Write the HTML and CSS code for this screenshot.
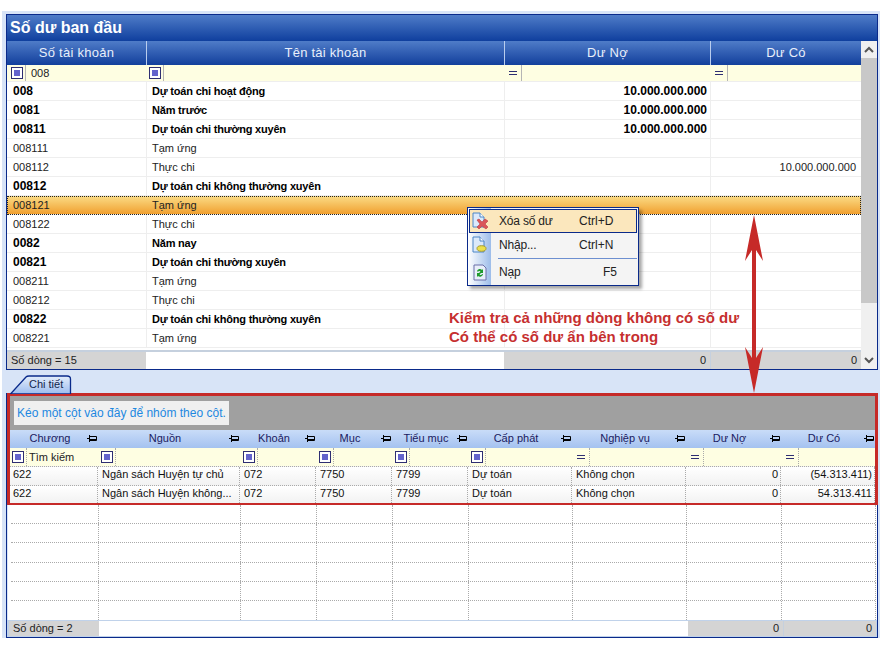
FILE: index.html
```html
<!DOCTYPE html>
<html lang="vi">
<head>
  <meta charset="UTF-8">
  <title>Số dư ban đầu</title>
  <link rel="stylesheet" href="styles.css">
</head>
<body>
  <div class="window">
    <!-- Top grid -->
    <div class="top-panel">
      <div class="title-bar">Số dư ban đầu</div>
      <div class="top-body">
        <div class="top-grid">
          <div class="top-row top-head">
            <div>Số tài khoản</div>
            <div>Tên tài khoản</div>
            <div>Dư Nợ</div>
            <div>Dư Có</div>
          </div>
          <div class="top-row top-filter">
            <div><span class="chk"></span><span class="sep"></span>008</div>
            <div><span class="chk"></span><span class="sep"></span></div>
            <div><span class="eq"></span><span class="sep"></span></div>
            <div><span class="eq"></span><span class="sep"></span></div>
          </div>
          <div class="top-row data bold"><div>008</div><div>Dự toán chi hoạt động</div><div class="num">10.000.000.000</div><div></div></div>
          <div class="top-row data bold"><div>0081</div><div>Năm trước</div><div class="num">10.000.000.000</div><div></div></div>
          <div class="top-row data bold"><div>00811</div><div>Dự toán chi thường xuyên</div><div class="num">10.000.000.000</div><div></div></div>
          <div class="top-row data"><div>008111</div><div>Tạm ứng</div><div></div><div></div></div>
          <div class="top-row data"><div>008112</div><div>Thực chi</div><div></div><div class="num">10.000.000.000</div></div>
          <div class="top-row data bold"><div>00812</div><div>Dự toán chi không thường xuyên</div><div></div><div></div></div>
          <div class="top-row data selected"><div>008121</div><div>Tạm ứng</div><div></div><div></div></div>
          <div class="top-row data"><div>008122</div><div>Thực chi</div><div></div><div></div></div>
          <div class="top-row data bold"><div>0082</div><div>Năm nay</div><div></div><div></div></div>
          <div class="top-row data bold"><div>00821</div><div>Dự toán chi thường xuyên</div><div></div><div></div></div>
          <div class="top-row data"><div>008211</div><div>Tạm ứng</div><div></div><div></div></div>
          <div class="top-row data"><div>008212</div><div>Thực chi</div><div></div><div></div></div>
          <div class="top-row data bold"><div>00822</div><div>Dự toán chi không thường xuyên</div><div></div><div></div></div>
          <div class="top-row data"><div>008221</div><div>Tạm ứng</div><div></div><div></div></div>
          <div class="top-spacer"></div>
          <div class="top-row top-foot">
            <div class="gray">Số dòng = 15</div>
            <div></div>
            <div class="gray num">0</div>
            <div class="gray num">0</div>
          </div>
        </div>
        <div class="scrollbar">
          <svg class="chevron" width="16" height="17" viewBox="0 0 16 17"><path d="M4 11l4-4 4 4" fill="none" stroke="#555" stroke-width="2"/></svg>
          <div class="thumb"></div>
          <svg class="chevron chevron-end" width="16" height="17" viewBox="0 0 16 17"><path d="M4 6l4 4 4-4" fill="none" stroke="#555" stroke-width="2"/></svg>
        </div>
      </div>
    </div>

    <!-- Tab -->
    <div class="tab-strip">
      <div class="tab">
        <svg class="tab-shape" width="62" height="19" viewBox="0 0 62 19">
          <defs>
            <linearGradient id="tabFill" x1="0" y1="0" x2="0" y2="1">
              <stop offset="0" stop-color="#e3edfb"/>
              <stop offset="1" stop-color="#9dbcee"/>
            </linearGradient>
          </defs>
          <path d="M0.5 19L16 2Q17 1 19 1H57Q60.500 1 60.500 4V19Z" fill="url(#tabFill)" stroke="#0a2a8a" stroke-width="1.300"/>
        </svg>
        <span class="tab-label">Chi tiết</span>
      </div>
    </div>

    <!-- Detail grid -->
    <div class="detail-panel">
      <div class="red-box">
        <div class="group-area"><span class="group-hint">Kéo một cột vào đây để nhóm theo cột.</span></div>
        <div class="det-row det-head">
          <div>Chương<svg class="pin"><use href="#pin"/></svg></div>
          <div>Nguồn<svg class="pin"><use href="#pin"/></svg></div>
          <div>Khoản<svg class="pin"><use href="#pin"/></svg></div>
          <div>Mục<svg class="pin"><use href="#pin"/></svg></div>
          <div>Tiểu mục<svg class="pin"><use href="#pin"/></svg></div>
          <div>Cấp phát<svg class="pin"><use href="#pin"/></svg></div>
          <div>Nghiệp vụ<svg class="pin"><use href="#pin"/></svg></div>
          <div>Dư Nợ<svg class="pin"><use href="#pin"/></svg></div>
          <div>Dư Có<svg class="pin"><use href="#pin"/></svg></div>
        </div>
        <div class="det-row det-filter">
          <div><span class="chk"></span><span class="sep"></span>Tìm kiếm</div>
          <div><span class="chk"></span><span class="sep"></span></div>
          <div><span class="chk"></span><span class="sep"></span></div>
          <div><span class="chk"></span><span class="sep"></span></div>
          <div><span class="chk"></span><span class="sep"></span></div>
          <div><span class="chk"></span><span class="sep"></span></div>
          <div><span class="eq"></span><span class="sep"></span></div>
          <div><span class="eq"></span><span class="sep"></span></div>
          <div><span class="eq"></span><span class="sep"></span></div>
        </div>
        <div class="det-row det-data">
          <div>622</div><div>Ngân sách Huyện tự chủ</div><div>072</div><div>7750</div><div>7799</div><div>Dự toán</div><div>Không chọn</div><div class="num">0</div><div class="num">(54.313.411)</div>
        </div>
        <div class="det-row det-data">
          <div>622</div><div>Ngân sách Huyện không...</div><div>072</div><div>7750</div><div>7799</div><div>Dự toán</div><div>Không chọn</div><div class="num">0</div><div class="num">54.313.411</div>
        </div>
      </div>
      <div class="det-blank">
        <div class="det-row"><div></div><div></div><div></div><div></div><div></div><div></div><div></div><div></div><div></div></div>
        <div class="det-row"><div></div><div></div><div></div><div></div><div></div><div></div><div></div><div></div><div></div></div>
        <div class="det-row"><div></div><div></div><div></div><div></div><div></div><div></div><div></div><div></div><div></div></div>
        <div class="det-row"><div></div><div></div><div></div><div></div><div></div><div></div><div></div><div></div><div></div></div>
        <div class="det-row"><div></div><div></div><div></div><div></div><div></div><div></div><div></div><div></div><div></div></div>
        <div class="det-row"><div></div><div></div><div></div><div></div><div></div><div></div><div></div><div></div><div></div></div>
      </div>
      <div class="det-foot">
        <div class="gray">Số dòng = 2</div>
        <div class="blank"></div>
        <div class="gray num">0</div>
        <div class="gray num">0</div>
      </div>
    </div>
  </div>

  <!-- Context menu -->
  <div class="context-menu">
    <div class="menu-item hover">
      <svg class="menu-icon" width="18" height="18" viewBox="0 0 18 18">
        <path d="M2 1h7l4 4v10H2z" fill="#dbe9fb" stroke="#4c86c6"/>
        <path d="M9 1v4h4" fill="#fff" stroke="#4c86c6"/>
        <path d="M6 8l2-1 3 3 3-3 3 2-3 3 3 3-2 2-4-3-3 3-2-2 3-3z" fill="#d9545a" stroke="#b52b30" stroke-width=".5"/>
      </svg>
      <span class="menu-text">Xóa số dư</span><span class="menu-key">Ctrl+D</span>
    </div>
    <div class="menu-item">
      <svg class="menu-icon" width="18" height="18" viewBox="0 0 18 18">
        <path d="M2 1h7l4 4v11H2z" fill="#dbe9fb" stroke="#4c86c6"/>
        <path d="M9 1v4h4" fill="#fff" stroke="#4c86c6"/>
        <ellipse cx="10.500" cy="12.500" rx="4.500" ry="2.800" fill="#ece04c" stroke="#a59a2c"/>
      </svg>
      <span class="menu-text">Nhập...</span><span class="menu-key">Ctrl+N</span>
    </div>
    <div class="menu-sep"></div>
    <div class="menu-item">
      <svg class="menu-icon" width="18" height="18" viewBox="0 0 18 18">
        <path d="M3 2h9l3 3v12H3z" fill="#e8eefa" stroke="#6a6fa8"/>
        <path d="M6 8a3 3 0 0 1 5-1l1-1v4H8l1.500-1.500A1.500 1.500 0 0 0 7 9zM12 11a3 3 0 0 1-5 2l-1 1v-4h4l-1.500 1.500A1.500 1.500 0 0 0 11 11z" fill="#1f9a2c"/>
      </svg>
      <span class="menu-text">Nạp</span><span class="menu-key menu-key-f">F5</span>
    </div>
  </div>

  <!-- Annotation -->
  <div class="note">Kiểm tra cả những dòng không có số dư<br>Có thể có số dư ẩn bên trong</div>
  <svg class="big-arrow" width="20" height="178" viewBox="0 0 20 178">
    <path d="M10 0L19 46L12 35V143L19 132L10 178L1 132L8 143V35L1 46Z" fill="#c62a28"/>
  </svg>

  <svg width="0" height="0" class="defs">
    <symbol id="pin" viewBox="0 0 10 7">
      <path d="M0 3.500h2M2.500 0v7M3 1.500h6.500v4H3M3 4.500h6" fill="none" stroke="#000"/>
    </symbol>
  </svg>
</body>
</html>
```
FILE: styles.css
```css
* {
  box-sizing: border-box;
  margin: 0;
  padding: 0;
}

body {
  position: relative;
  width: 882px;
  height: 651px;
  overflow: hidden;
  background-color: white;
  font-family: "Liberation Sans", Arial, sans-serif;
  font-size: 11px;
  color: #222;
}

.window {
  width: 878px;
  height: 627px;
  margin: 11px 2px 0;
  padding: 3px 2px 0 4px;
  background-color: #d8e4f7;
}

/* top grid */
.top-panel {
  height: 356px;
  border: 1px solid #0a2a8a;
  background-color: white;
}

.title-bar {
  height: 26px;
  padding-left: 3px;
  background: linear-gradient(#4f7cc8, #0f3f9e);
  color: white;
  font-size: 16px;
  font-weight: bold;
  line-height: 25px;
}

.top-body {
  display: flex;
  height: 328px;
}

.top-grid {
  display: flex;
  flex-direction: column;
  width: 854px;
}

.top-row {
  display: grid;
  grid-template-columns: 139px 358px 206px 151px;
}

.top-head {
  height: 24px;
  background: linear-gradient(#4f7cc8, #123f9c);
  color: #e8effb;
  font-size: 13px;
  letter-spacing: 0.25px;
  line-height: 23px;
  text-align: center;
}

.top-head div + div {
  border-left: 1px solid #b9cdee;
}

.top-filter {
  height: 17px;
  background-color: #fefee2;
  border-bottom: 1px solid #eee;
}

.top-filter div {
  display: flex;
  align-items: center;
  padding-left: 3px;
  line-height: 16px;
}

.top-filter div:first-child {
  padding-left: 4px;
}

.chk {
  flex: none;
  width: 12px;
  height: 12px;
  border: 1px solid #2e2e72;
  background-color: #6464cc;
  box-shadow: inset 0 0 0 2px white;
}

.eq {
  flex: none;
  width: 8px;
  height: 4px;
  margin: 0 2px;
  border-top: 1px solid #2e2e72;
  border-bottom: 1px solid #2e2e72;
}

.sep {
  flex: none;
  align-self: stretch;
  width: 1px;
  margin: 0 5px 0 2px;
  background-color: #b5b5b5;
}

.data {
  height: 19px;
  line-height: 18px;
  border-bottom: 1px solid #eee;
}

.data div {
  padding: 0 3px 0 5px;
  white-space: nowrap;
}

.data div:first-child {
  padding-left: 6px;
}

.data div:last-child {
  padding-right: 5px;
}

.data div + div {
  border-left: 1px solid #eee;
}

.bold {
  color: black;
  font-size: 12px;
  font-weight: bold;
}

.bold div:nth-child(2) {
  font-size: 11px;
  letter-spacing: -0.2px;
}

.num {
  text-align: right;
}

.selected {
  background: linear-gradient(#fbdc86, #f0a030);
  outline: 1px dotted #222;
  outline-offset: -1px;
}

.selected div + div {
  border-left-color: transparent;
}

.top-spacer {
  flex: 1;
}

.top-foot {
  height: 19px;
  border-top: 2px solid #c5d0de;
  line-height: 17px;
}

.gray {
  padding: 0 4px;
  background-color: #d4d4d4;
}

.gray + .gray {
  border-left: 1px solid #c5d0de;
}

.scrollbar {
  display: flex;
  flex-direction: column;
  width: 16px;
  background-color: #f0f0f0;
}

.chevron {
  display: block;
  flex: none;
}

.thumb {
  height: 245px;
  background-color: #c8c8c8;
}

.chevron-end {
  margin-top: auto;
}

/* tab strip */
.tab-strip {
  height: 23px;
  padding: 5px 0 0 4px;
}

.tab {
  position: relative;
  width: 62px;
  height: 19px;
}

.tab-shape {
  position: absolute;
  top: 0;
  left: 0;
}

.tab-label {
  position: relative;
  display: block;
  padding-left: 19px;
  line-height: 19px;
  color: #12264c;
}

/* detail grid */
.detail-panel {
  height: 245px;
  border: 1px solid #0a2a8a;
  border-top: none;
  background-color: white;
}

.red-box {
  height: 112px;
  margin: 0 -1px 0 0;
  border: 3px solid #c62a28;
  background-color: white;
}

.group-area {
  display: flex;
  align-items: center;
  height: 34px;
  padding-left: 4px;
  background-color: #a0a0a0;
}

.group-hint {
  padding: 0 3px;
  background-color: #f0f0f0;
  color: #1e88e0;
  font-size: 12px;
  line-height: 24px;
}

.det-row {
  display: grid;
  grid-template-columns: 88px 142px 76px 76px 76px 104px 114px 95px 94px;
}

.det-head {
  height: 18px;
  background: linear-gradient(#c9dcf8, #a4c2f0);
  color: #1a1a60;
  line-height: 17px;
}

.det-head div {
  position: relative;
  padding-right: 8px;
  text-align: center;
  white-space: nowrap;
}

.pin {
  position: absolute;
  top: 5px;
  right: 1px;
  width: 10px;
  height: 7px;
}

.det-filter {
  height: 18px;
  background-color: #fefee2;
}

.det-filter div {
  display: flex;
  align-items: center;
  padding-left: 3px;
}

.det-filter div:first-child {
  padding-left: 2px;
}

.det-filter .sep {
  margin-right: 2px;
  background: none;
  border-left: 1px dotted #aaa;
}

.det-data {
  height: 19px;
  background: linear-gradient(white, #f2f2f2);
  border-top: 1px dotted #aaa;
  color: #111;
  line-height: 14px;
}

.det-data div {
  padding: 0 2px 0 4px;
  border-right: 1px dotted #aaa;
  white-space: nowrap;
}

.det-data div:first-child {
  padding-left: 3px;
}

.det-data + .det-data {
  height: 18px;
}

.det-blank {
  height: 115px;
  padding: 0 2px 0 3px;
  border-left: 1px solid #d8e4f7;
}

.det-blank .det-row {
  height: 19px;
  border-bottom: 1px dotted #aaa;
}

.det-blank .det-row:nth-child(3n) {
  height: 20px;
}

.det-blank .det-row div {
  border-right: 1px dotted #aaa;
}

.det-foot {
  display: grid;
  grid-template-columns: 90px 589px 95px 1fr;
  height: 17px;
  border: 1px solid #c0d2ea;
  border-left-width: 2px;
  line-height: 15px;
}

/* context menu */
.context-menu {
  position: absolute;
  top: 207px;
  left: 467px;
  width: 172px;
  height: 79px;
  padding: 1px;
  border: 1px solid #0a2a8a;
  background: linear-gradient(90deg, white, #9dbdea 23px, #f4f4f4 23px);
  box-shadow: 3px 3px 3px rgba(0, 0, 0, 0.35);
  font-size: 12px;
}

.menu-item {
  display: flex;
  align-items: center;
  height: 24px;
  padding-left: 2px;
}

.menu-item.hover {
  background-color: #fbe7bd;
  outline: 1px solid #0a2a8a;
  outline-offset: -1px;
}

.menu-icon {
  flex: none;
  width: 18px;
  margin-right: 10px;
}

.menu-text {
  width: 80px;
  letter-spacing: -0.2px;
}

.menu-key-f {
  margin-left: 24px;
}

.menu-sep {
  height: 1px;
  margin: 1px 0 1px 29px;
  background-color: #6d8fd0;
}

/* annotation */
.note {
  position: absolute;
  top: 308px;
  left: 449px;
  color: #c62f2f;
  font-size: 15px;
  font-weight: bold;
  line-height: 19px;
  white-space: nowrap;
}

.big-arrow {
  position: absolute;
  top: 215px;
  left: 744px;
}

.defs {
  position: absolute;
}
```
